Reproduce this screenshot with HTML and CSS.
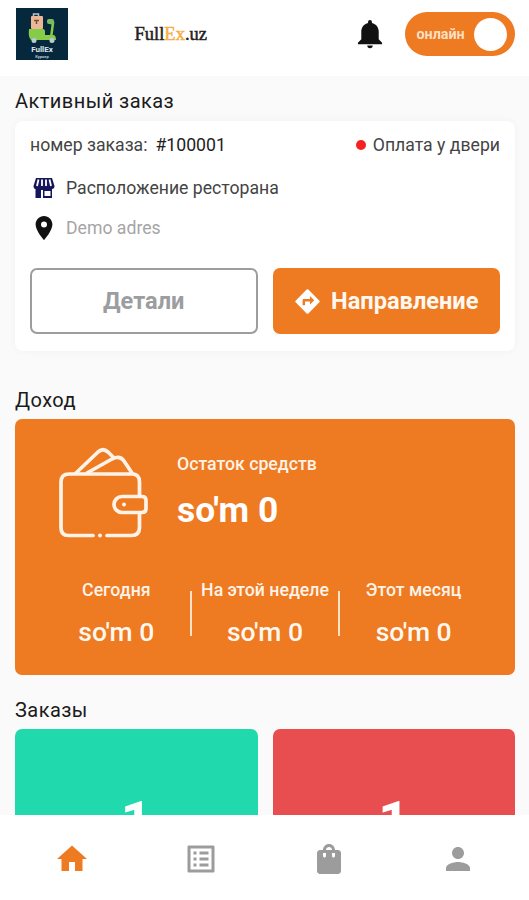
FILE: index.html
```html
<!DOCTYPE html>
<html lang="ru">
<head>
<meta charset="utf-8">
<title>FullEx.uz</title>
<link rel="stylesheet" href="styles.css">
</head>
<body>
<div class="app">
  <header class="topbar">
    <svg class="logo" viewBox="0 0 52 52">
      <rect width="52" height="52" fill="#06283d"/>
      <path d="M17.500 8V6h5v2" fill="none" stroke="#b8c4ca" stroke-width="1.500"/>
      <rect x="15" y="8" width="12" height="13" rx="1" fill="#eab894"/>
      <path d="M18 12.500h5M20.500 13v3" fill="none" stroke="#77503a" stroke-width="1.500"/>
      <path d="M34 15h3l-2 15" fill="none" stroke="#86cc48" stroke-width="2.500"/>
      <path d="M13 21h14q2 0 2 3v3h8q3 0 3 5H15q-3-3-2-11z" fill="#86cc48"/>
      <rect x="31" y="11" width="7" height="5" rx="2" fill="#7aba61"/>
      <circle cx="18" cy="32.500" r="2.500" fill="#b9cad2"/>
      <circle cx="36" cy="32.500" r="2.500" fill="#b9cad2"/>
      <text class="logo-name" x="26" y="44">FullEx</text>
      <text class="logo-sub" x="26" y="50">Курьер</text>
    </svg>
    <div class="brand">Full<span>Ex</span>.uz</div>
    <svg class="bell" viewBox="0 0 26 30">
      <path d="M13 0c1.200 0 2 .8 2 2v1c4.300 1 7 4.500 7 9v8l3.500 3.500V25H.5v-1.500L4 20v-8c0-4.500 2.700-8 7-9V2c0-1.200.8-2 2-2zM10.200 26.500h5.600a2.800 2.800 0 0 1-5.600 0z" fill="#111"/>
    </svg>
    <div class="toggle"><span class="toggle-label">онлайн</span><span class="knob"></span></div>
  </header>

  <main class="content">
    <h2 class="title">Активный заказ</h2>
    <section class="order">
      <div class="order-head">
        <span class="order-label">номер заказа:</span>
        <span class="order-id">#100001</span>
        <span class="dot"></span>
        <span class="payment">Оплата у двери</span>
      </div>
      <div class="place">
        <svg class="shop" viewBox="0 0 22 22">
          <path d="M3 1h16l2.500 8c0 2-1 3-2.500 3v9H10v-8H8v8H2.500v-9C1 12 .5 10 .5 9z" fill="#16165c"/>
          <path d="M5.500 2.500L4 9M9 2.500V9M13 2.500V9M16.500 2.500L18 9" stroke="#fff" stroke-width="1.800" fill="none"/>
          <path d="M11.500 14h6v5h-6z" fill="#fff"/>
        </svg>
        <span>Расположение ресторана</span>
      </div>
      <div class="address">
        <svg class="pin" viewBox="5 2 14 20">
          <path d="M12 2C8.130 2 5 5.130 5 9c0 5.250 7 13 7 13s7-7.750 7-13c0-3.870-3.130-7-7-7zm0 9.500a2.500 2.500 0 0 1 0-5 2.500 2.500 0 0 1 0 5z" fill="#111"/>
        </svg>
        <span>Demo adres</span>
      </div>
      <div class="actions">
        <button class="btn details">Детали</button>
        <button class="btn route">
          <svg class="direction" viewBox="1 1 22 22">
            <path d="M21.710 11.290l-9-9a1 1 0 0 0-1.410 0l-9 9a1 1 0 0 0 0 1.410l9 9c.39.39 1.020.39 1.410 0l9-9a1 1 0 0 0 0-1.410zM14 14.500V12h-4v3H8v-4c0-.55.45-1 1-1h5V7.500l3.500 3.500-3.500 3.500z" fill="#fff"/>
          </svg>
          <span>Направление</span>
        </button>
      </div>
    </section>

    <h2 class="title">Доход</h2>
    <section class="income">
      <div class="balance">
        <svg class="wallet" viewBox="0 0 92 92">
          <g fill="none" stroke="#fff3e8" stroke-width="3.700" stroke-linecap="round" stroke-linejoin="round">
            <path d="M35 88.500H10q-7 0-7-8V35q0-8 8-8h63q7.500 0 7.500 8v14M81.500 66v14.500q0 8-8 8H49"/>
            <path d="M64 49.500h20q4 0 4 4v8q0 4-4 4H64a8 8 0 0 1 0-16z"/>
            <path d="M18 26L40 5q5-4.500 10 0l6 6M29 26L54 12q8-4 12 2l8 12"/>
          </g>
          <circle cx="66" cy="57.500" r="2" fill="#fff3e8"/>
          <circle cx="42" cy="88.500" r="2" fill="#fff3e8"/>
        </svg>
        <div class="balance-text">
          <div class="balance-label">Остаток средств</div>
          <div class="balance-value">so'm 0</div>
        </div>
      </div>
      <div class="periods">
        <div class="period"><span class="period-label">Сегодня</span><span class="period-value">so'm 0</span></div>
        <i class="divider"></i>
        <div class="period"><span class="period-label">На этой неделе</span><span class="period-value">so'm 0</span></div>
        <i class="divider"></i>
        <div class="period"><span class="period-label">Этот месяц</span><span class="period-value">so'm 0</span></div>
      </div>
    </section>

    <h2 class="title">Заказы</h2>
    <section class="counts">
      <div class="count green">1</div>
      <div class="count red">1</div>
    </section>
  </main>

  <nav class="tabs">
    <a class="tab active"><svg viewBox="0 0 24 24"><path d="M10 20v-6h4v6h5v-8h3L12 3 2 12h3v8z"/></svg></a>
    <a class="tab"><svg viewBox="0 0 24 24"><path d="M19 5v14H5V5h14m1.100-2H3.900c-.5 0-.9.4-.9.9v16.200c0 .4.4.9.9.9h16.200c.4 0 .9-.5.9-.9V3.900c0-.5-.5-.9-.9-.9zM11 7h6v2h-6V7zm0 4h6v2h-6v-2zm0 4h6v2h-6zM7 7h2v2H7zm0 4h2v2H7zm0 4h2v2H7z"/></svg></a>
    <a class="tab"><svg viewBox="0 0 24 24"><path d="M18 6h-2c0-2.210-1.790-4-4-4S8 3.790 8 6H6c-1.100 0-2 .9-2 2v12c0 1.100.9 2 2 2h12c1.100 0 2-.9 2-2V8c0-1.100-.9-2-2-2zm-8 4c0 .55-.45 1-1 1s-1-.45-1-1V8h2v2zm2-6c1.100 0 2 .9 2 2h-4c0-1.100.9-2 2-2zm4 6c0 .55-.45 1-1 1s-1-.45-1-1V8h2v2z"/></svg></a>
    <a class="tab"><svg viewBox="0 0 24 24"><path d="M12 12c2.210 0 4-1.790 4-4s-1.790-4-4-4-4 1.790-4 4 1.790 4 4 4zm0 2c-2.670 0-8 1.340-8 4v2h16v-2c0-2.660-5.330-4-8-4z"/></svg></a>
  </nav>
</div>
</body>
</html>
```
FILE: styles.css
```css
* { box-sizing: border-box; }
body { margin: 0; font-family: Roboto, sans-serif; background: #fafafa; }
.app { width: 529px; height: 900px; display: flex; flex-direction: column; overflow: hidden; }

.topbar { flex: none; height: 76px; padding: 8px 14.500px 0 15.500px; background: #fff; display: flex; align-items: flex-start; }
.logo { width: 52px; height: 52px; }
.logo-name { font: bold 8px Roboto, sans-serif; fill: #dce6ec; text-anchor: middle; }
.logo-sub { font: bold 4px Roboto, sans-serif; fill: #b9c8d0; text-anchor: middle; }
.brand { margin: 15px 0 0 67px; width: 222px; font: 18.500px/22px "Liberation Serif", serif; color: #222; -webkit-text-stroke: 0.500px; white-space: nowrap; }
.brand span { color: #f5ae45; }
.bell { width: 26px; height: 29px; margin-top: 11.500px; }
.toggle { width: 110px; height: 44px; margin: 4px 0 0 auto; padding: 0 8px 0 12px; border-radius: 22px; background: #ee7a22; display: flex; align-items: center; justify-content: space-between; }
.toggle-label { font-size: 14.300px; font-weight: 700; color: #ffdfc4; }
.knob { width: 33px; height: 33px; border-radius: 50%; background: #fff; }

.content { flex: 1; min-height: 0; overflow: hidden; padding: 13px 14px 0 15px; }
.title { margin: 0; height: 24px; font-size: 20px; line-height: 24px; font-weight: 400; color: #1b1b1b; letter-spacing: 0.450px; white-space: nowrap; }

.order { height: 230px; margin: 8px 0 37px; padding: 13px 15px 17px; background: #fff; border-radius: 8px; box-shadow: 0 0 8px rgba(0, 0, 0, 0.040); display: flex; flex-direction: column; }
.order-head { display: flex; align-items: center; height: 22px; font-size: 17.650px; color: #444; white-space: nowrap; }
.order-id { margin-left: 8px; color: #222; }
.dot { width: 10px; height: 10px; margin: 0 7px 0 auto; border-radius: 50%; background: #f5221e; }
.place, .address { display: flex; align-items: center; height: 24px; font-size: 17.650px; white-space: nowrap; }
.place { margin-top: 20px; color: #444; }
.address { margin-top: 16px; color: #a5a5a5; }
.shop { width: 22px; height: 22px; margin: 0 11px 0 3px; }
.pin { width: 18px; height: 24px; margin: 0 13px 0 5px; }
.actions { display: grid; grid-template-columns: 1fr 1fr; gap: 15px; margin-top: auto; }
.btn { height: 66px; border-radius: 7px; padding: 0; font: 700 23.600px Roboto, sans-serif; display: flex; align-items: center; justify-content: center; white-space: nowrap; }
.details { background: #fff; border: 2px solid #9c9d9f; color: #9c9d9f; }
.route { background: #ee7a22; border: 0; color: #fff8f0; }
.direction { width: 27px; height: 27px; margin-right: 10px; }

.income { height: 256px; margin: 7px 0 23px; padding: 28px 28px 0; border-radius: 7px; background: #ee7a22; color: #fff3e8; }
.balance { display: flex; padding-left: 15px; height: 92px; }
.wallet { width: 92px; height: 92px; }
.balance-text { margin: 6px 0 0 27px; white-space: nowrap; }
.balance-label { font-size: 17.700px; line-height: 22px; font-weight: 500; }
.balance-value { margin-top: 15px; font-size: 35.300px; line-height: 40px; font-weight: 700; color: #fff; }
.periods { display: grid; grid-template-columns: 1fr 2px 1fr 2px 1fr; margin-top: 40px; }
.period { display: flex; flex-direction: column; align-items: center; white-space: nowrap; }
.period-label { font-size: 17.700px; line-height: 22px; font-weight: 500; }
.period-value { margin-top: 16px; font-size: 26.500px; line-height: 30px; font-weight: 500; color: #fff8f0; }
.divider { height: 45px; margin-top: 12px; background: #ffe3c8; }

.counts { display: grid; grid-template-columns: 1fr 1fr; gap: 15px; margin-top: 7px; }
.count { height: 190px; padding-top: 60px; border-radius: 7px; text-align: center; font-size: 54px; line-height: 64px; font-weight: 700; color: #fff; }
.green { background: #20daae; }
.red { background: #e84e50; }

.tabs { flex: none; height: 85px; padding: 26px 7px 0 8px; background: #fff; display: grid; grid-template-columns: repeat(4, 1fr); align-items: start; justify-items: center; }
.tab { display: block; height: 36px; }
.tab svg { width: 36px; height: 36px; fill: #9c9c9c; }
.active svg { fill: #ee7a22; }
```
